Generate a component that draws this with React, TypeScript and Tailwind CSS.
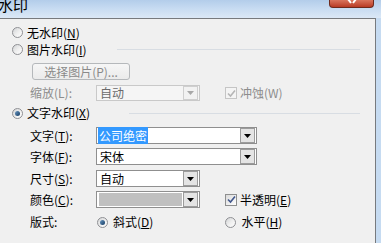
import type { ReactNode } from 'react'

// Win7-style "水印" (watermark) dialog

function Radio({ checked }: { checked?: boolean }) {
  return (
    <span className="flex h-[11px] w-[11px] shrink-0 items-center justify-center rounded-full border border-[#8f9094] bg-linear-to-br from-[#d2d4d6] via-[#eeeeee] to-white">
      {checked && (
        <span className="h-[5px] w-[5px] rounded-full bg-linear-to-br from-[#6c9ac4] to-[#143c63]" />
      )}
    </span>
  )
}

function Check({ disabled }: { disabled?: boolean }) {
  return (
    <span
      className={
        disabled
          ? 'flex h-[12px] w-[12px] shrink-0 items-center justify-center border border-[#c5c5c5] bg-[#f4f4f4]'
          : 'flex h-[12px] w-[12px] shrink-0 items-center justify-center border border-[#8e8f8f] bg-linear-to-br from-[#dadada] to-white'
      }
    >
      <svg width="9" height="9" viewBox="0 0 9 9">
        <path
          d="M1 4.5 L3.5 7 L8 1.5"
          fill="none"
          stroke={disabled ? '#b5b5b5' : '#41578c'}
          strokeWidth="1.6"
        />
      </svg>
    </span>
  )
}

function Arrow({ disabled }: { disabled?: boolean }) {
  return (
    <span
      className={
        disabled
          ? 'flex h-[14px] w-[15px] shrink-0 items-center justify-center border border-[#cfcfcf] bg-[#f2f2f2]'
          : 'flex h-[15px] w-[15px] shrink-0 items-center justify-center border border-[#9c9c9c] bg-[#e4e4e4]'
      }
    >
      <svg width="7" height="4" viewBox="0 0 7 4">
        <path d="M0 0 H7 L3.5 4 Z" fill={disabled ? '#a8a8a8' : '#000'} />
      </svg>
    </span>
  )
}

function Label({ children }: { children: ReactNode }) {
  return <span className="ml-[18px] w-[66px] shrink-0">{children}</span>
}

export default function App() {
  return (
    <div className="flex h-[243px] w-[381px] flex-col overflow-hidden bg-[#c6dbf1] font-['Noto_Sans_CJK_SC',sans-serif] text-[12px] leading-none text-black">
      {/* title bar */}
      <div className="flex h-[18px] shrink-0 items-start bg-linear-to-b from-[#b3cdea] via-[#c8dcf2] to-[#dbe8f6]">
        <span className="ml-[-2px] mt-[-4px] text-[15px] leading-[17px]">水印</span>
        <span className="ml-auto mr-[7px] flex h-[8px] w-[45px] justify-center rounded-b-[4px] border border-t-0 border-[#6e2a1d] bg-linear-to-b from-[#d9745d] to-[#b83a24]">
          <svg width="10" height="4" viewBox="0 0 10 4">
            <path d="M1 -1 L4 3 M9 -1 L6 3" stroke="#fff" strokeWidth="2" />
          </svg>
        </span>
      </div>

      <div className="flex flex-1">
        <div className="flex w-[376px] flex-col border-t border-r border-[#777a7e] bg-[#f0f0f0] pl-[12px]">
          {/* 无水印 */}
          <div className="mt-[5px] flex h-[17px] items-center gap-[4px]">
            <Radio />
            <span>无水印(<u>N</u>)</span>
          </div>

          {/* 图片水印 */}
          <div className="flex h-[17px] items-center gap-[4px]">
            <Radio />
            <span>图片水印(<u>I</u>)</span>
            <span className="ml-[26px] mr-[15px] h-px flex-1 bg-[#d8dde3]" />
          </div>

          <div className="mt-[5px] flex h-[17px]">
            <span className="ml-[20px] flex w-[98px] items-center justify-center rounded-[3px] border border-[#b5b8bb] bg-linear-to-b from-[#f6f6f6] to-[#ebebeb] text-[#8a8a8a]">
              选择图片(P)...
            </span>
          </div>

          {/* 缩放 */}
          <div className="mt-[5px] flex h-[16px] items-center text-[#8d8d8d]">
            <Label>缩放(L):</Label>
            <span className="flex h-[16px] w-[104px] items-center border border-[#c9c9c9] bg-[#f5f5f5] pr-px">
              <span className="flex-1 pl-[3px] text-[#6a6a6a]">自动</span>
              <Arrow disabled />
            </span>
            <span className="ml-[25px] flex items-center gap-[3px]">
              <Check disabled />
              <span>冲蚀(W)</span>
            </span>
          </div>

          {/* 文字水印 */}
          <div className="mt-[3px] flex h-[18px] items-center gap-[4px]">
            <Radio checked />
            <span>文字水印(<u>X</u>)</span>
            <span className="ml-[35px] mr-[15px] h-px flex-1 bg-[#d8dde3]" />
          </div>

          <div className="mt-[5px] flex h-[17px] items-center">
            <Label>文字(<u>T</u>):</Label>
            <span className="flex h-[17px] w-[161px] items-center border border-[#8f8f8f] bg-white pr-px">
              <span className="flex-1 pl-px">
                <span className="bg-[#3399ff] px-px text-white">公司绝密</span>
              </span>
              <Arrow />
            </span>
          </div>

          <div className="mt-[4px] flex h-[17px] items-center">
            <Label>字体(<u>F</u>):</Label>
            <span className="flex h-[17px] w-[161px] items-center border border-[#8f8f8f] bg-white pr-px">
              <span className="flex-1 pl-[3px]">宋体</span>
              <Arrow />
            </span>
          </div>

          <div className="mt-[5px] flex h-[17px] items-center">
            <Label>尺寸(<u>S</u>):</Label>
            <span className="flex h-[17px] w-[104px] items-center border border-[#8f8f8f] bg-white pr-px">
              <span className="flex-1 pl-[3px]">自动</span>
              <Arrow />
            </span>
          </div>

          <div className="mt-[4px] flex h-[17px] items-center">
            <Label>颜色(<u>C</u>):</Label>
            <span className="flex h-[17px] w-[104px] items-center border border-[#8f8f8f] bg-white pl-[2px] pr-px">
              <span className="mr-px h-[13px] flex-1 bg-[#c0c0c0]" />
              <Arrow />
            </span>
            <span className="ml-[25px] flex items-center gap-[3px]">
              <Check />
              <span>半透明(<u>E</u>)</span>
            </span>
          </div>

          <div className="mt-[5px] flex h-[18px] items-center">
            <span className="ml-[18px] w-[67px] shrink-0">版式:</span>
            <Radio checked />
            <span className="ml-[5px]">斜式(<u>D</u>)</span>
            <span className="ml-[72px] flex items-center gap-[5px]">
              <Radio />
              <span>水平(<u>H</u>)</span>
            </span>
          </div>
        </div>
        <div className="flex-1" />
      </div>
    </div>
  )
}
